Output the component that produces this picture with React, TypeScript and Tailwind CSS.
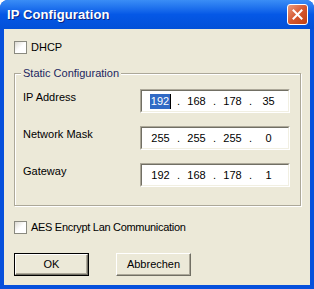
import React from 'react';

const body = { fontFamily: '"Liberation Sans", Arial, sans-serif' };

const CheckBox: React.FC<{ label: string; tight?: boolean }> = ({ label, tight }) => (
  <div className="flex h-[13px] items-center gap-[4px]">
    <div className="h-[13px] w-[13px] border border-[#8a8a80] bg-gradient-to-br from-[#dcdad2] via-white to-white" />
    <span className={`text-[11px] leading-[13px] text-black ${tight ? 'tracking-[-0.3px]' : ''}`}>{label}</span>
  </div>
);

const IpField: React.FC<{ parts: string[]; selectFirst?: boolean }> = ({ parts, selectFirst }) => (
  <div className="h-[24px] w-[150px] border border-t-[#aca899] border-l-[#aca899] border-r-white border-b-white">
    <div className="flex h-full items-center border border-t-[#716f64] border-l-[#716f64] border-r-[#f1efe2] border-b-[#f1efe2] bg-white pl-[6px] text-[11px] text-black">
      {parts.map((p, i) => (
        <React.Fragment key={i}>
          <div className="flex w-[25px] justify-center">
            {selectFirst && i === 0 ? (
              <span className="border-r border-black bg-[#316ac5] px-[1px] leading-[15px] text-white">{p}</span>
            ) : (
              <span>{p}</span>
            )}
          </div>
          {i < 3 && <div className="flex w-[11px] justify-center">.</div>}
        </React.Fragment>
      ))}
    </div>
  </div>
);

const Row: React.FC<{ label: string; parts: string[]; selectFirst?: boolean }> = ({ label, parts, selectFirst }) => (
  <div className="flex items-start">
    <div className="w-[125px] pl-[8px] pt-[2px] text-[11px] leading-[13px] text-black">{label}</div>
    <IpField parts={parts} selectFirst={selectFirst} />
  </div>
);

const XpButton: React.FC<{ label: string; isDefault?: boolean }> = ({ label, isDefault }) => (
  <div className={`h-[23px] w-[75px] ${isDefault ? 'border border-black' : ''}`}>
    <div className="flex h-full items-center justify-center border border-t-white border-l-white border-r-[#716f64] border-b-[#716f64] bg-[#ece9d8] text-[11px] text-black shadow-[inset_-1px_-1px_0_#aca899]">
      {label}
    </div>
  </div>
);

export default function App() {
  return (
    <div className="flex h-[289px] w-[314px] flex-col overflow-hidden rounded-t-[8px] bg-[#0650dc]" style={body}>
      <div className="flex h-[29px] items-center justify-between bg-gradient-to-b from-[#3a8df6] via-[#0558e6] to-[#0250d8] pl-[7px] pr-[6px]">
        <span className="text-[13px] font-bold tracking-[0.1px] text-white [text-shadow:1px_1px_0_#0a2484]">IP Configuration</span>
        <div className="flex h-[21px] w-[21px] items-center justify-center rounded-[3px] border border-white bg-gradient-to-br from-[#e99a7c] via-[#d5572f] to-[#c0400f]">
          <svg width="11" height="11" viewBox="0 0 11 11">
            <path d="M1.5 1.5 L9.5 9.5 M9.5 1.5 L1.5 9.5" stroke="white" strokeWidth="2" strokeLinecap="square" />
          </svg>
        </div>
      </div>
      <div className="mx-[4px] mb-[4px] flex flex-1 flex-col bg-[#ece9d8] pl-[10px] pt-[12px]">
        <CheckBox label="DHCP" />
        <div className="relative mt-[19px] flex h-[133px] w-[287px] flex-col gap-[13px] border border-[#aca899] pt-[15px] shadow-[inset_1px_1px_0_#fff,1px_1px_0_#fff]">
          <span className="absolute left-[6px] top-[-7px] bg-[#ece9d8] px-[2px] text-[11px] leading-[13px] text-[#1b2660]">
            Static Configuration
          </span>
          <Row label="IP Address" parts={['192', '168', '178', '35']} selectFirst />
          <Row label="Network Mask" parts={['255', '255', '255', '0']} />
          <Row label="Gateway" parts={['192', '168', '178', '1']} />
        </div>
        <div className="mt-[15px]">
          <CheckBox label="AES Encrypt Lan Communication" tight />
        </div>
        <div className="mt-[19px] flex gap-[27px]">
          <XpButton label="OK" isDefault />
          <XpButton label="Abbrechen" />
        </div>
      </div>
    </div>
  );
}
